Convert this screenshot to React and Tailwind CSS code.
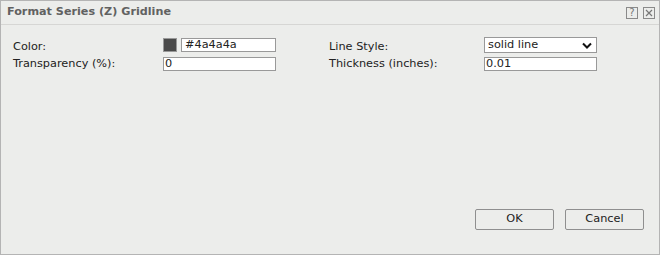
export default function App() {
    return (
        <div className="flex h-[255px] w-[660px] flex-col border border-[#b4b4b4] bg-[#ecedeb] text-[11.3px] text-[#222]" style={{ fontFamily: '"DejaVu Sans", sans-serif' }}>
            <div className="flex h-[24px] items-center justify-between border-b border-[#d6d6d4] pl-[6px] pr-[4px]">
                <span className="text-[11.2px] font-bold text-[#616161]">Format Series (Z) Gridline</span>
                <div className="flex gap-[5px]">
                    <div className="flex h-[12px] w-[12px] items-center justify-center border border-[#8a8a8a] text-[10px] leading-none text-[#777]">?</div>
                    <div className="flex h-[12px] w-[12px] items-center justify-center border border-[#8a8a8a]">
                        <svg width="8" height="8" viewBox="0 0 8 8"><path d="M1 1L7 7M7 1L1 7" stroke="#777" strokeWidth="1.2" /></svg>
                    </div>
                </div>
            </div>

            <div className="flex flex-1 flex-col px-[12px] pt-[13px]">
                <div className="grid grid-cols-[150px_166px_155px_113px] gap-y-[4px]">
                    <div className="flex h-[15px] items-center pt-[3px]">Color:</div>
                    <div className="flex items-start gap-[4px]">
                        <div className="h-[14px] w-[14px] border border-[#999] bg-[#4a4a4a]"></div>
                        <div className="flex h-[14px] w-[95px] items-center border border-[#999] bg-white px-[3px]">#4a4a4a</div>
                    </div>
                    <div className="flex h-[15px] items-center pt-[3px]">Line Style:</div>
                    <div className="flex h-[16px] items-center justify-between border border-[#999] bg-white pl-[3px] pr-[4px] -mt-[1px]">
                        <span>solid line</span>
                        <svg width="10" height="7" viewBox="0 0 10 7"><path d="M1 1.5L5 5.5L9 1.5" fill="none" stroke="#111" strokeWidth="2" /></svg>
                    </div>

                    <div className="flex h-[14px] items-center">Transparency (%):</div>
                    <div className="flex h-[14px] w-[113px] items-center border border-[#999] bg-white px-[1px]">0</div>
                    <div className="flex h-[14px] items-center">Thickness (inches):</div>
                    <div className="flex h-[14px] items-center border border-[#999] bg-white px-[1px]">0.01</div>
                </div>

                <div className="mt-auto mb-[24px] flex justify-end gap-[11px] pr-[3px]">
                    <button className="h-[21px] w-[79px] rounded-[2px] border border-[#8f8f8f] bg-[#ecedeb] text-[#222]">OK</button>
                    <button className="h-[21px] w-[79px] rounded-[2px] border border-[#8f8f8f] bg-[#ecedeb] text-[#222]">Cancel</button>
                </div>
            </div>
        </div>
    );
}
